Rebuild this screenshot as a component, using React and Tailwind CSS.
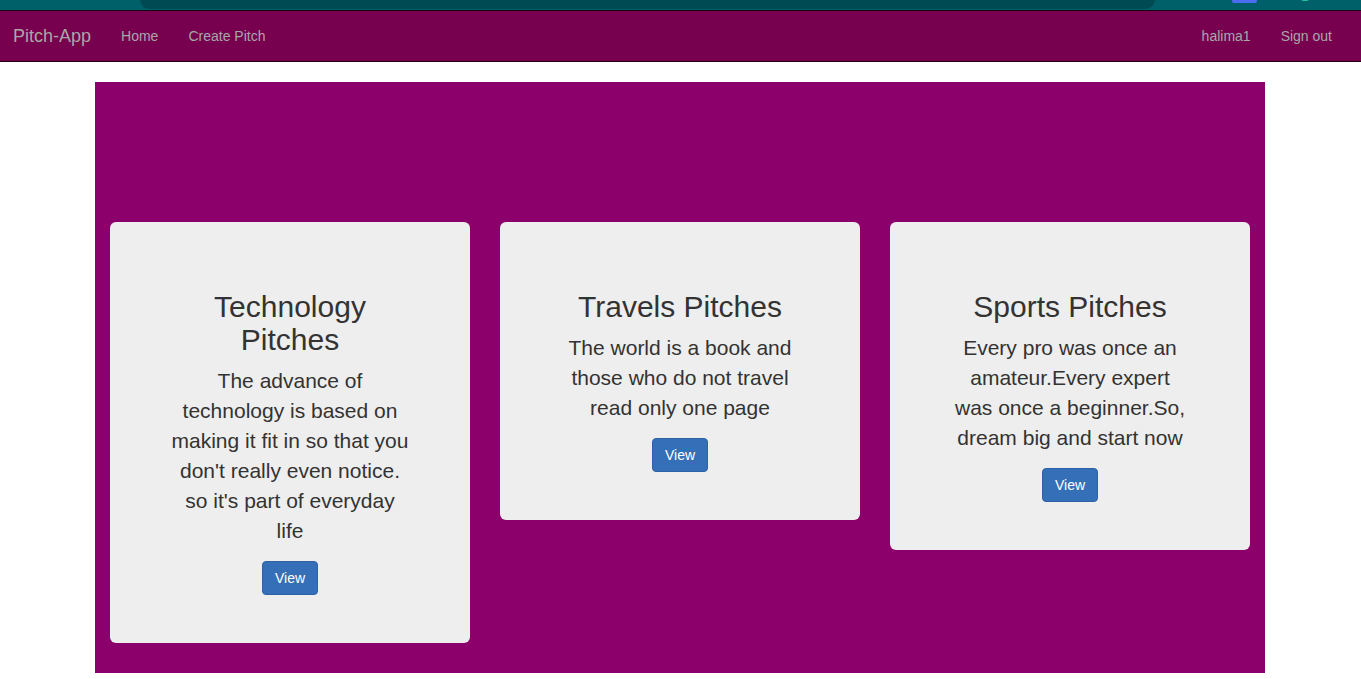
import React from 'react';

const pitches = [
  {
    title: 'Technology Pitches',
    text: "The advance of technology is based on making it fit in so that you don't really even notice. so it's part of everyday life",
  },
  {
    title: 'Travels Pitches',
    text: 'The world is a book and those who do not travel read only one page',
  },
  {
    title: 'Sports Pitches',
    text: 'Every pro was once an amateur.Every expert was once a beginner.So, dream big and start now',
  },
];

const PitchCard = ({ pitch }) => (
  <div className="w-[360px] bg-[#eeeeee] rounded-[6px] px-[60px] pt-[48px] pb-[48px] text-center text-[#333333]">
    <h2 className="mt-[20px] mb-[10px] text-[30px] leading-[33px]">{pitch.title}</h2>
    <p className="mb-[15px] text-[21px] leading-[30px]">{pitch.text}</p>
    <button className="h-[34px] px-[12px] text-[14px] leading-[20px] text-white bg-[#356fb7] border border-[#2e62a4] rounded-[4px]">
      View
    </button>
  </div>
);

export default function App() {
  return (
    <div className="min-h-[679px] bg-white font-['Liberation_Sans',Arial,sans-serif]">
      {/* browser chrome remnant */}
      <div className="relative h-[10px] bg-[#00606a] overflow-hidden">
        <div className="absolute left-[140px] w-[1015px] top-[-10px] h-[19px] bg-[#004b53] rounded-[10px]" />
        <div className="absolute left-[1232px] top-[-6px] w-[25px] h-[9px] bg-[#4a6cf0] rounded-[2px]" />
        <div className="absolute left-[1300px] top-[-7px] w-[10px] h-[8px] bg-[#20c0a0] rounded-full" />
      </div>
      <nav className="h-[52px] bg-[#77004f] border-y border-[#1a0010] flex items-center justify-between px-[13px] mb-[20px]">
        <div className="flex items-center">
          <span className="text-[18px] text-[#a8a8a8] mr-[15px]">Pitch-App</span>
          <a className="px-[15px] text-[14px] text-[#a8a8a8]">Home</a>
          <a className="px-[15px] text-[14px] text-[#a8a8a8]">Create Pitch</a>
        </div>
        <div className="flex items-center pr-[16px]">
          <a className="px-[15px] text-[14px] text-[#a8a8a8]">halima1</a>
          <a className="pl-[15px] text-[14px] text-[#a8a8a8]">Sign out</a>
        </div>
      </nav>
      <div className="w-[1170px] ml-[95px] h-[591px] bg-[#8b006b] pt-[140px] px-[15px] flex items-start gap-[30px]">
        {pitches.map((p) => (
          <PitchCard key={p.title} pitch={p} />
        ))}
      </div>
    </div>
  );
}
